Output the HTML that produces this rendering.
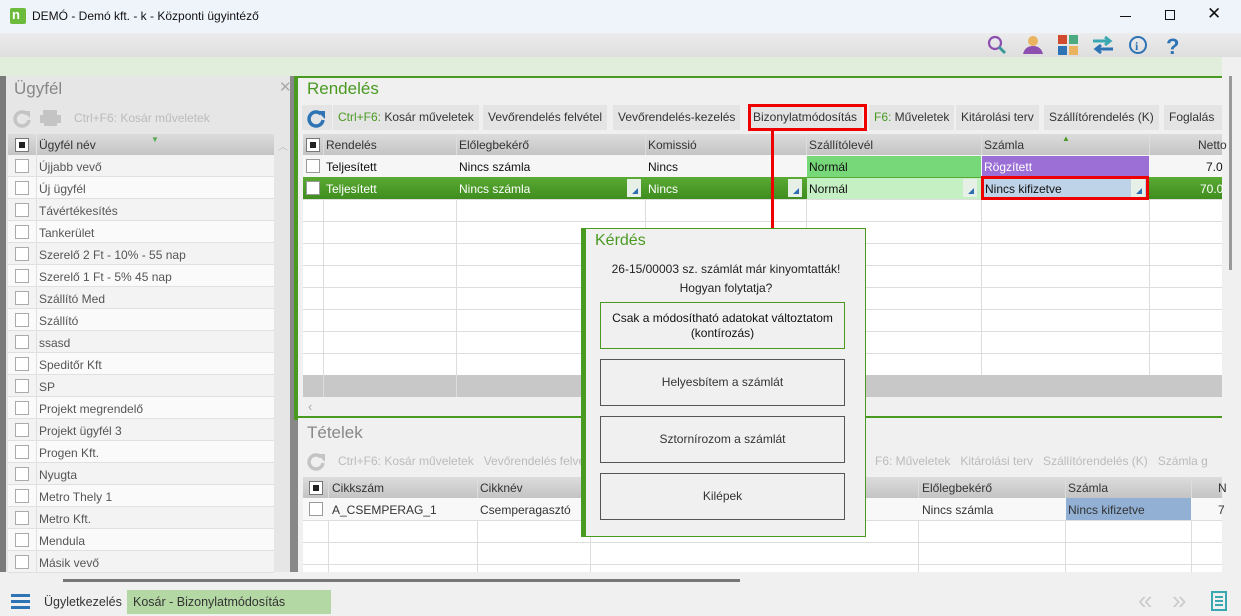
<!DOCTYPE html>
<html><head><meta charset="utf-8"><style>
*{box-sizing:border-box;margin:0;padding:0}
body{width:1241px;height:615px;position:relative;overflow:hidden;background:#f0f0f0;font-family:"Liberation Sans",sans-serif;font-size:12px;color:#333}
.a{position:absolute}
.t{position:absolute;white-space:nowrap}
.cb{position:absolute;width:14px;height:14px;border:1px solid #999;background:#fff}
.cbh{position:absolute;width:14px;height:14px;border:1px solid #777;background:#fff}
.cbh:after{content:"";position:absolute;left:3px;top:3px;width:6px;height:6px;background:#222}
.hdr{position:absolute;height:21px;background:linear-gradient(#dcdcdc,#c4c4c4)}
.vl{position:absolute;width:1px;background:#ddd}
.hl{position:absolute;height:1px;background:#ddd}
.btn{position:absolute;height:25px;background:#e4e4e4;top:105px;line-height:25px;padding:0 5px;white-space:nowrap}
.dd{position:absolute;width:14px;height:18px;background:#e6f0e6;top:2px}
.dd:after{content:"";position:absolute;right:3px;bottom:3px;border-left:6px solid transparent;border-bottom:6px solid #2e6db3}
.dbtn{position:absolute;left:600px;width:245px;border:1px solid #555;background:#f0f0f0;text-align:center;font-size:12px;color:#333}
</style></head><body>
<!-- title bar -->
<div class="a" style="left:0;top:0;width:1241px;height:33px;background:#eff3fa"></div>
<div class="a" style="left:10px;top:8px;width:16px;height:16px;background:#6cbb3c;border-radius:2px"></div>
<div class="t" style="left:12px;top:7px;color:#fff;font-weight:bold;font-size:13px">n</div>
<div class="t" style="left:32px;top:9px;font-size:12px;color:#111">DEMÓ - Demó kft. - k - Központi ügyintéző</div>
<div class="a" style="left:1120px;top:16px;width:11px;height:1px;background:#111"></div>
<div class="a" style="left:1165px;top:10px;width:10px;height:10px;border:1px solid #111"></div>
<div class="t" style="left:1207px;top:4px;font-size:17px;color:#111">✕</div>
<!-- toolbar -->
<div class="a" style="left:0;top:33px;width:1241px;height:24px;background:linear-gradient(#ececec,#dedede)"></div>
<svg class="a" style="left:985px;top:33px" width="210" height="24">
<circle cx="10" cy="10" r="6" fill="none" stroke="#8d4fb0" stroke-width="2.2"/><line x1="14" y1="14" x2="20" y2="20" stroke="#3a9a9a" stroke-width="3"/>
<circle cx="48" cy="8" r="5" fill="#e9b35f"/><path d="M38 21 Q40 13 48 13 Q56 13 58 21Z" fill="#8d4fb0"/>
<rect x="73" y="2" width="9" height="9" fill="#d04a2e"/><rect x="84" y="2" width="9" height="9" fill="#4caa80"/><rect x="73" y="13" width="9" height="9" fill="#2e74b5"/><rect x="84" y="13" width="9" height="9" fill="#e9b35f"/>
<path d="M108 8 H124 M120 4 L125 8 L120 12" stroke="#3aa8b0" stroke-width="3" fill="none"/><path d="M128 16 H112 M116 12 L111 16 L116 20" stroke="#2e74b5" stroke-width="3" fill="none"/>
<circle cx="153" cy="12" r="8" fill="none" stroke="#2e74b5" stroke-width="2"/><text x="150" y="17" font-family="Liberation Serif" font-weight="bold" font-size="12" fill="#2e74b5">i</text>
<text x="181" y="21" font-family="Liberation Sans" font-weight="bold" font-size="22" fill="#2e74b5">?</text>
</svg>
<div class="a" style="left:0;top:57px;width:1222px;height:19px;background:#e0eedb"></div>
<div class="a" style="left:1222px;top:57px;width:19px;height:558px;background:#f0f0f0"></div>
<div class="a" style="left:1229px;top:76px;width:3px;height:194px;background:#999"></div>
<!-- left border -->
<div class="a" style="left:0;top:76px;width:6px;height:496px;background:#7a7a7a"></div>
<!-- left panel -->
<div class="a" style="left:6px;top:76px;width:288px;height:496px;background:#e6e6e6"></div>
<div class="t" style="left:14px;top:79px;font-size:17px;color:#888">Ügyfél</div>
<div class="t" style="left:279px;top:78px;font-size:15px;color:#aaa">✕</div>
<svg class="a" style="left:13px;top:108px" width="55" height="20"><path d="M14 6 A7 7 0 1 0 16 12" stroke="#c4c4c4" stroke-width="3.5" fill="none"/><path d="M10 3 L17 3 L17 10Z" fill="#c4c4c4"/><rect x="30" y="2" width="14" height="5" fill="#c4c4c4"/><rect x="27" y="7" width="21" height="8" fill="#c4c4c4"/><rect x="31" y="13" width="13" height="5" fill="#c4c4c4"/></svg>
<div class="t" style="left:74px;top:111px;color:#bbb">Ctrl+F6: Kosár műveletek</div>
<div class="hdr" style="left:8px;top:134px;width:266px"></div>
<div class="cbh" style="left:15px;top:138px"></div>
<div class="vl" style="left:36px;top:134px;height:438px;background:#e4e4e4"></div>
<div class="t" style="left:39px;top:138px">Ügyfél név</div>
<div class="t" style="left:151px;top:135px;color:#5a5;font-size:8px">▼</div>
<div class="t" style="left:278px;top:138px;color:#bbb;font-size:10px">︿</div>
<div id="lrows"></div>
<div class="a" style="left:290px;top:76px;width:4px;height:496px;background:#888"></div>
<div class="a" style="left:294px;top:76px;width:4px;height:344px;background:#4a9a22"></div>
<div class="a" style="left:294px;top:420px;width:4px;height:152px;background:#888"></div>
<!-- right panel Rendelés -->
<div class="a" style="left:298px;top:76px;width:924px;height:342px;background:#f0f0f0;border-top:2px solid #4a9a22;border-bottom:2px solid #4a9a22"></div>
<div class="t" style="left:307px;top:79px;font-size:17px;color:#4a9a22">Rendelés</div>
<div class="btn" style="left:302px;width:30px"></div>
<svg class="a" style="left:307px;top:108px" width="20" height="20"><path d="M14 6 A7 7 0 1 0 16 12" stroke="#2e74b5" stroke-width="3.5" fill="none"/><path d="M10 3 L18 3 L18 11Z" fill="#2e74b5"/></svg>
<div class="btn" style="left:333px"><span style="color:#4a9a22">Ctrl+F6:</span> Kosár műveletek</div>
<div class="btn" style="left:483px">Vevőrendelés felvétel</div>
<div class="btn" style="left:613px">Vevőrendelés-kezelés</div>
<div class="btn" style="left:748px">Bizonylatmódosítás</div>
<div class="btn" style="left:869px"><span style="color:#4a9a22">F6:</span> Műveletek</div>
<div class="btn" style="left:956px">Kitárolási terv</div>
<div class="btn" style="left:1044px">Szállítórendelés (K)</div>
<div class="btn" style="left:1164px;width:58px">Foglalás</div>
<div class="a" style="left:748px;top:104px;width:119px;height:27px;border:3px solid #e00"></div>
<div class="a" style="left:303px;top:155px;width:919px;height:220px;background:#fff"></div>
<div class="hdr" style="left:303px;top:134px;width:919px"></div>
<div class="cbh" style="left:306px;top:138px"></div>
<div class="t" style="left:326px;top:138px">Rendelés</div>
<div class="t" style="left:459px;top:138px">Előlegbekérő</div>
<div class="t" style="left:648px;top:138px">Komissió</div>
<div class="t" style="left:809px;top:138px">Szállítólevél</div>
<div class="t" style="left:984px;top:138px">Számla</div>
<div class="t" style="left:1062px;top:134px;color:#4a9a22;font-size:8px">▲</div>
<div class="t" style="left:1198px;top:138px">Netto</div>
<div id="rgrid"></div>
<!-- row1 -->
<div class="a" style="left:303px;top:155px;width:919px;height:22px;background:#f6f6f6"></div>
<div class="cb" style="left:306px;top:159px"></div>
<div class="t" style="left:326px;top:160px;color:#111">Teljesített</div>
<div class="t" style="left:459px;top:160px;color:#111">Nincs számla</div>
<div class="t" style="left:648px;top:160px;color:#111">Nincs</div>
<div class="a" style="left:807px;top:156px;width:174px;height:21px;background:#76d878"></div>
<div class="t" style="left:809px;top:160px;color:#111">Normál</div>
<div class="a" style="left:982px;top:156px;width:167px;height:21px;background:#9b6fd6"></div>
<div class="t" style="left:984px;top:160px;color:#fff">Rögzített</div>
<div class="t" style="left:1206px;top:160px;color:#111">7.0</div>
<!-- row2 -->
<div class="a" style="left:303px;top:177px;width:919px;height:22px;background:linear-gradient(#5aaa35,#3f8d1e)"></div>
<div class="cb" style="left:306px;top:181px"></div>
<div class="t" style="left:326px;top:182px;color:#fff">Teljesített</div>
<div class="t" style="left:459px;top:182px;color:#fff">Nincs számla</div>
<div class="dd" style="left:627px;top:179px"></div>
<div class="t" style="left:648px;top:182px;color:#fff">Nincs</div>
<div class="dd" style="left:788px;top:179px"></div>
<div class="a" style="left:807px;top:178px;width:174px;height:21px;background:#c4f0c4"></div>
<div class="t" style="left:809px;top:182px;color:#111">Normál</div>
<div class="dd" style="left:963px;top:179px"></div>
<div class="a" style="left:982px;top:178px;width:167px;height:21px;background:#bfd3e8"></div>
<div class="t" style="left:985px;top:182px;color:#111">Nincs kifizetve</div>
<div class="dd" style="left:1131px;top:179px"></div>
<div class="a" style="left:981px;top:176px;width:168px;height:24px;border:3px solid #e00"></div>
<div class="t" style="left:1200px;top:182px;color:#fff">70.0</div>
<div class="a" style="left:303px;top:375px;width:919px;height:22px;background:#c8c8c8"></div>
<div class="vl" style="left:323px;top:375px;height:22px;background:#ddd"></div>
<div class="vl" style="left:456px;top:375px;height:22px;background:#ddd"></div>
<div class="t" style="left:308px;top:399px;color:#aaa;font-size:13px">‹</div>
<!-- Tételek -->
<div class="t" style="left:307px;top:423px;font-size:17px;color:#888">Tételek</div>
<svg class="a" style="left:307px;top:451px" width="20" height="20"><path d="M14 6 A7 7 0 1 0 16 12" stroke="#c4c4c4" stroke-width="3.5" fill="none"/><path d="M10 3 L18 3 L18 11Z" fill="#c4c4c4"/></svg>
<div class="t" style="left:338px;top:454px;color:#bbb">Ctrl+F6: Kosár műveletek &nbsp; Vevőrendelés felvétel</div>
<div class="t" style="left:875px;top:454px;color:#bbb">F6: Műveletek &nbsp; Kitárolási terv &nbsp; Szállítórendelés (K) &nbsp; Számla g</div>
<div class="a" style="left:303px;top:498px;width:919px;height:74px;background:#fff"></div>
<div class="hdr" style="left:303px;top:477px;width:919px"></div>
<div class="cbh" style="left:309px;top:481px"></div>
<div class="t" style="left:332px;top:481px">Cikkszám</div>
<div class="t" style="left:480px;top:481px">Cikknév</div>
<div class="t" style="left:922px;top:481px">Előlegbekérő</div>
<div class="t" style="left:1068px;top:481px">Számla</div>
<div class="t" style="left:1218px;top:481px">N</div>
<div id="tgrid"></div>
<div class="a" style="left:303px;top:498px;width:919px;height:22px;background:#f8f8f8"></div>
<div class="cb" style="left:309px;top:502px"></div>
<div class="t" style="left:332px;top:503px">A_CSEMPERAG_1</div>
<div class="t" style="left:480px;top:503px">Csemperagasztó</div>
<div class="t" style="left:922px;top:503px">Nincs számla</div>
<div class="a" style="left:1066px;top:498px;width:125px;height:22px;background:#92b0d4"></div>
<div class="t" style="left:1068px;top:503px">Nincs kifizetve</div>
<div class="t" style="left:1218px;top:503px">7</div>
<!-- bottom -->
<div class="a" style="left:63px;top:579px;width:677px;height:3px;background:#777"></div>
<div class="a" style="left:11px;top:594px;width:19px;height:3px;background:#2e74b5"></div>
<div class="a" style="left:11px;top:600px;width:19px;height:3px;background:#2e74b5"></div>
<div class="a" style="left:11px;top:606px;width:19px;height:3px;background:#2e74b5"></div>
<div class="t" style="left:44px;top:595px;font-size:12.5px">Ügyletkezelés</div>
<div class="a" style="left:127px;top:590px;width:204px;height:24px;background:#b4d8a4"></div>
<div class="t" style="left:133px;top:595px;font-size:12.5px">Kosár - Bizonylatmódosítás</div>
<div class="t" style="left:1138px;top:585px;font-size:26px;color:#ccc">«</div>
<div class="t" style="left:1172px;top:585px;font-size:26px;color:#ccc">»</div>
<svg class="a" style="left:1211px;top:591px" width="16" height="20"><rect x="1" y="1" width="14" height="18" fill="none" stroke="#3aa8b0" stroke-width="2"/><path d="M4 6H12M4 10H12M4 14H12" stroke="#3aa8b0" stroke-width="2"/></svg>
<!-- arrow -->
<div class="a" style="left:771px;top:130px;width:3px;height:100px;background:#e00"></div>
<div class="a" style="left:767px;top:228px;border-left:5px solid transparent;border-right:5px solid transparent;border-top:12px solid #e00"></div>
<!-- dialog -->
<div class="a" style="left:581px;top:228px;width:285px;height:309px;background:#f0f0f0;border:1px solid #4a9a22;border-left:5px solid #4a9a22"></div>
<div class="t" style="left:595px;top:232px;font-size:16px;color:#4a9a22">Kérdés</div>
<div class="t" style="left:586px;top:262px;width:280px;text-align:center;color:#222">26-15/00003 sz. számlát már kinyomtatták!</div>
<div class="t" style="left:586px;top:281px;width:280px;text-align:center;color:#222">Hogyan folytatja?</div>
<div class="dbtn" style="top:302px;height:47px;border-color:#4a9a22;padding-top:8px;line-height:15px;color:#111">Csak a módosítható adatokat változtatom<br>(kontírozás)</div>
<div class="dbtn" style="top:359px;height:47px;line-height:45px">Helyesbítem a számlát</div>
<div class="dbtn" style="top:416px;height:47px;line-height:45px">Sztornírozom a számlát</div>
<div class="dbtn" style="top:473px;height:47px;line-height:45px">Kilépek</div>
<script>
var names=["Újjabb vevő","Új ügyfél","Távértékesítés","Tankerület","Szerelő 2 Ft - 10% - 55 nap","Szerelő 1 Ft - 5% 45 nap","Szállító Med","Szállító","ssasd","Speditőr Kft","SP","Projekt megrendelő","Projekt  ügyfél 3","Progen Kft.","Nyugta","Metro Thely 1","Metro Kft.","Mendula","Másik vevő"];
var h="";
names.forEach(function(n,i){var y=155+i*22;
h+='<div class="a" style="left:8px;top:'+y+'px;width:266px;height:22px;background:'+(i%2?'#fafafa':'#f3f3f3')+';border-bottom:1px solid #e0e0e0"></div>';
h+='<div class="cb" style="left:15px;top:'+(y+4)+'px;border-color:#aaa"></div>';
h+='<div class="vl" style="left:36px;top:'+y+'px;height:22px;background:#e0e0e0"></div>';
h+='<div class="t" style="left:39px;top:'+(y+5)+'px;color:#555">'+n+'</div>';});
document.getElementById("lrows").outerHTML=h;
var g="";
[323,456,645,806,981,1149].forEach(function(x){g+='<div class="vl" style="left:'+x+'px;top:134px;height:241px"></div>';});
for(var y=177;y<=375;y+=22)g+='<div class="hl" style="left:303px;top:'+y+'px;width:919px"></div>';
document.getElementById("rgrid").outerHTML=g;
var t="";
[328,477,590,918,1065,1191].forEach(function(x){t+='<div class="vl" style="left:'+x+'px;top:477px;height:95px"></div>';});
for(var y=520;y<572;y+=22)t+='<div class="hl" style="left:303px;top:'+y+'px;width:919px"></div>';
document.getElementById("tgrid").outerHTML=t;
</script>
</body></html>
